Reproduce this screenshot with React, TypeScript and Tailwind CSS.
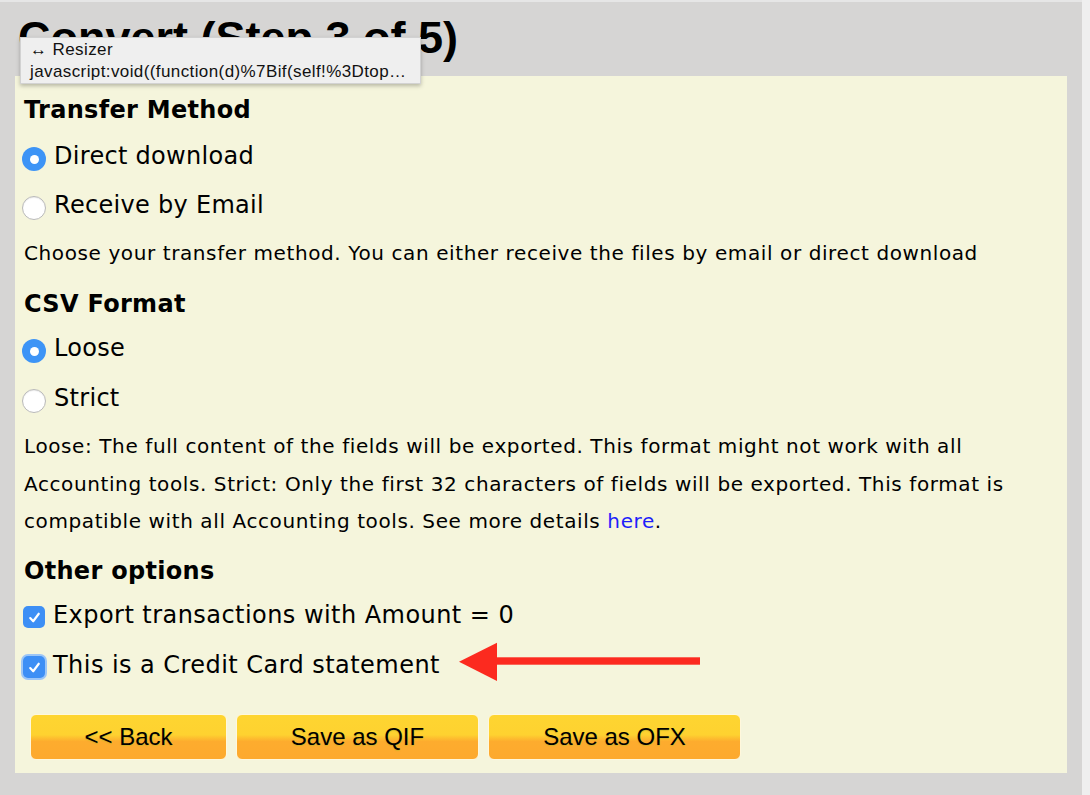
import React from "react";

const V = { fontFamily: '"DejaVu Sans", Verdana, sans-serif' };
const H = { fontFamily: '"Liberation Sans", Arial, Helvetica, sans-serif' };

function Radio({ checked }: { checked?: boolean }) {
  return checked ? (
    <span className="mt-[6px] w-[24px] h-[24px] rounded-full bg-[#3d94f6] flex items-center justify-center shrink-0">
      <span className="w-[9px] h-[9px] rounded-full bg-white" />
    </span>
  ) : (
    <span className="mt-[6px] w-[24px] h-[24px] rounded-full bg-white border border-[#b9b9b9] shadow-[inset_0_1px_1px_rgba(0,0,0,0.08)] shrink-0" />
  );
}

function Check({ focus }: { focus?: boolean }) {
  return (
    <span
      className={
        "mt-[5px] w-[22px] h-[22px] rounded-[5px] bg-[#3d8ff5] flex items-center justify-center shrink-0 " +
        (focus ? "shadow-[0_0_0_2px_#9cc6f7]" : "")
      }
    >
      <svg width="15" height="15" viewBox="0 0 14 14">
        <path d="M3 7.5 L5.8 10.5 L11 3.5" fill="none" stroke="white" strokeWidth="2" strokeLinecap="round" strokeLinejoin="round" />
      </svg>
    </span>
  );
}

function Btn({ w, children }: { w: string; children: React.ReactNode }) {
  return (
    <div
      className={
        w +
        " h-[46px] rounded-[6px] border border-[#fff8dc] bg-[linear-gradient(to_bottom,#fed531_0%,#fed230_45%,#fdac2e_60%,#fda92e_100%)] flex items-center justify-center text-[24px] text-black [text-shadow:0_1px_1px_rgba(200,180,40,0.8)]"
      }
      style={H}
    >
      {children}
    </div>
  );
}

export default function App() {
  return (
    <div className="w-[1090px] h-[795px] bg-[#efefef] flex overflow-hidden relative">
      <div className="w-[1082px] h-full bg-[#d6d5d4] border-t-[2px] border-[#e6e6e6] pl-[15px]">
        <h1 className="h-[74px] leading-[72px] ml-[3px] text-[45px] font-bold text-black whitespace-nowrap" style={H}>
          Convert (Step 3 of 5)
        </h1>
        <div className="w-[1052px] h-[697px] bg-[#f5f5dc] pl-[9px] pt-[14px] text-black" style={V}>
          <div className="h-[40px] leading-[40px] text-[24px] font-bold tracking-[0.3px]">Transfer Method</div>
          <div className="mt-[6px] h-[40px] flex items-center -ml-[2px] gap-[8px] text-[24px] tracking-[0.3px]">
            <Radio checked />
            <span>Direct download</span>
          </div>
          <div className="mt-[9px] h-[40px] flex items-center -ml-[2px] gap-[8px] text-[24px] tracking-[0.3px]">
            <Radio />
            <span>Receive by Email</span>
          </div>
          <div className="mt-[8px] h-[40px] leading-[40px] text-[20px] tracking-[0.6px] whitespace-nowrap">
            Choose your transfer method. You can either receive the files by email or direct download
          </div>
          <div className="mt-[11px] h-[40px] leading-[40px] text-[24px] font-bold tracking-[0.3px]">CSV Format</div>
          <div className="mt-[4px] h-[40px] flex items-center -ml-[2px] gap-[8px] text-[24px] tracking-[0.3px]">
            <Radio checked />
            <span>Loose</span>
          </div>
          <div className="mt-[10px] h-[40px] flex items-center -ml-[2px] gap-[8px] text-[24px] tracking-[0.3px]">
            <Radio />
            <span>Strict</span>
          </div>
          <div className="mt-[10px] leading-[37.5px] text-[20px] tracking-[0.6px] whitespace-nowrap">
            Loose: The full content of the fields will be exported. This format might not work with all
            <br />
            Accounting tools. Strict: Only the first 32 characters of fields will be exported. This format is
            <br />
            compatible with all Accounting tools. See more details <span className="text-[#1e1efa]">here</span>.
          </div>
          <div className="mt-[10px] h-[40px] leading-[40px] text-[24px] font-bold tracking-[0.3px]">Other options</div>
          <div className="mt-[4px] h-[40px] flex items-center -ml-[1px] gap-[8px] text-[24px] tracking-[0.45px]">
            <Check />
            <span>Export transactions with Amount = 0</span>
          </div>
          <div className="mt-[10px] h-[40px] flex items-center -ml-[1px] gap-[8px] text-[24px] tracking-[0.45px]">
            <Check focus />
            <span>This is a Credit Card statement</span>
          </div>
          <div className="mt-[29px] flex gap-[9px] ml-[6px]">
            <Btn w="w-[197px]">&lt;&lt; Back</Btn>
            <Btn w="w-[243px]">Save as QIF</Btn>
            <Btn w="w-[253px]">Save as OFX</Btn>
          </div>
        </div>
      </div>

      <div
        className="absolute left-[20px] top-[37px] w-[401px] h-[47px] bg-[#efefef] border border-[#d2d2d2] shadow-[0_2px_4px_rgba(0,0,0,0.25)] pl-[9px] pt-[1px] text-[17px] leading-[22px] tracking-[0.4px] text-[#111] whitespace-nowrap"
        style={H}
      >
        <div>↔ Resizer</div>
        <div>javascript:void((function(d)%7Bif(self!%3Dtop…</div>
      </div>

      <svg className="absolute left-[455px] top-[640px]" width="250" height="45" viewBox="0 0 250 45">
        <polygon points="4,21.7 42,2.7 42,41" fill="#fc2a1f" />
        <rect x="41" y="17.3" width="204" height="7.4" fill="#fc2a1f" />
      </svg>
    </div>
  );
}
